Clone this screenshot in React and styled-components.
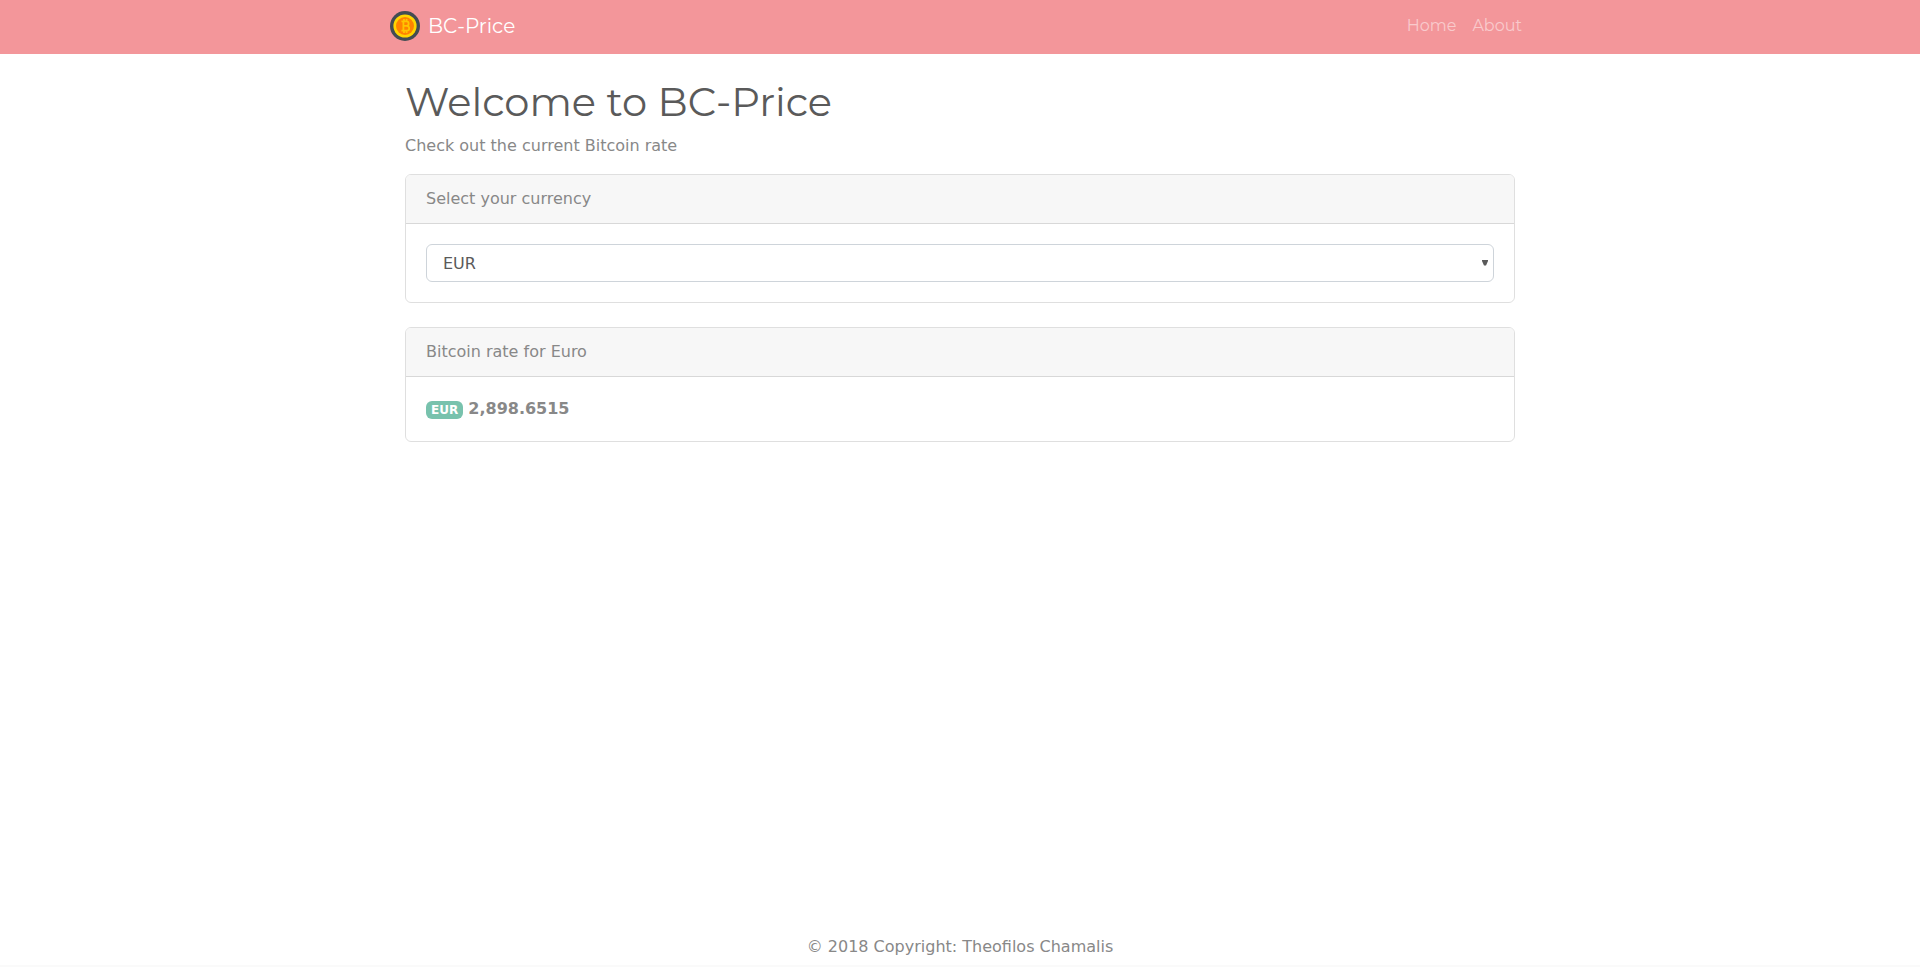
import React, { useState } from "react";
import styled, { createGlobalStyle } from "styled-components";

const display = 'Montserrat, "DejaVu Sans", sans-serif';
const body = '"DejaVu Sans", sans-serif';

const GlobalStyle = createGlobalStyle`
  *, *::before, *::after {
    box-sizing: border-box;
  }
  body {
    margin: 0;
    background: #fff;
    color: #888;
    font: 400 16px/24px ${body};
  }
`;

const Page = styled.div`
  min-height: 100vh;
  display: flex;
  flex-direction: column;
`;

const Navbar = styled.header`
  background: #f3969a;
  font-family: ${display};
`;

const NavInner = styled.div`
  max-width: 1140px;
  min-height: 54px;
  margin: 0 auto;
  display: flex;
  align-items: center;
  justify-content: space-between;
`;

const Brand = styled.a`
  display: flex;
  align-items: center;
  gap: 8px;
  padding-bottom: 2px;
  color: #fff;
  font-size: 20px;
  line-height: 30px;
  text-decoration: none;
`;

const NavLinks = styled.nav`
  display: flex;
  padding-bottom: 2px;
`;

const NavLink = styled.a`
  padding: 8px;
  color: rgba(255, 255, 255, 0.5);
  text-decoration: none;

  &:hover {
    color: rgba(255, 255, 255, 0.75);
  }
`;

const Main = styled.main`
  flex: 1;
  width: 100%;
  max-width: 1140px;
  margin: 0 auto;
  padding: 24px 15px 0;
`;

const Title = styled.h1`
  margin: 0 0 8px;
  color: #5a5a5a;
  font: 400 40px/48px ${display};
`;

const Lead = styled.p`
  margin: 0 0 16px;
`;

const Card = styled.section`
  margin-bottom: 24px;
  border: 1px solid rgba(0, 0, 0, 0.125);
  border-radius: 6px;
`;

const CardHeader = styled.div`
  display: block;
  padding: 12px 20px;
  border-bottom: 1px solid rgba(0, 0, 0, 0.125);
  border-radius: 5px 5px 0 0;
  background: #f7f7f7;
`;

const CardBody = styled.div`
  padding: 20px;
`;

const SelectWrap = styled.div`
  position: relative;
`;

const Select = styled.select`
  display: block;
  width: 100%;
  height: 38px;
  padding: 7px 16px 5px;
  border: 1px solid #ced4da;
  border-radius: 6px;
  appearance: none;
  background: #fff;
  color: #5a5a5a;
  font: 400 16px/24px ${body};
`;

const Caret = styled.svg`
  position: absolute;
  top: 16px;
  right: 6px;
  pointer-events: none;
`;

const Badge = styled.span`
  display: inline-block;
  padding: 3px 5px;
  border-radius: 6px;
  background: #78c2ad;
  color: #fff;
  font-size: 12px;
  line-height: 12px;
  font-weight: 700;
`;

const Rate = styled.strong`
  font-weight: 700;
`;

const Footer = styled.footer`
  padding: 8px 15px 6px;
  border-bottom: 2px solid #fafafa;
  text-align: center;
`;

function CoinLogo() {
  return (
    <svg width="30" height="30" viewBox="0 0 30 30" aria-hidden="true">
      <circle cx="15" cy="15" r="15" fill="#434c53" />
      <circle cx="15" cy="15" r="11.6" fill="#ffd500" />
      <circle cx="15" cy="15" r="9" fill="#ff8300" />
      <path
        d="M11.4 10.4h5a2.200 2.200 0 0 1 0 4.500h-3 3.400a2.400 2.400 0 0 1 0 4.800h-5.400M13.400 10.400v9.300M14 8v2.200M16.600 8v2.200M14 19.900v2M16.600 19.900v2"
        fill="none"
        stroke="#ffc400"
        strokeWidth="1.8"
      />
    </svg>
  );
}

const currencies = { EUR: { name: "Euro", rate: "2,898.6515" } };

export default function App() {
  const [code, setCode] = useState("EUR");
  const { name, rate } = currencies[code];

  return (
    <Page>
      <GlobalStyle />
      <Navbar>
        <NavInner>
          <Brand href="#">
            <CoinLogo />
            BC-Price
          </Brand>
          <NavLinks>
            <NavLink href="#home">Home</NavLink>
            <NavLink href="#about">About</NavLink>
          </NavLinks>
        </NavInner>
      </Navbar>
      <Main>
        <Title>Welcome to BC-Price</Title>
        <Lead>Check out the current Bitcoin rate</Lead>
        <Card>
          <CardHeader as="label" htmlFor="currency">
            Select your currency
          </CardHeader>
          <CardBody>
            <SelectWrap>
              <Select id="currency" value={code} onChange={(e) => setCode(e.target.value)}>
                {Object.keys(currencies).map((c) => (
                  <option key={c}>{c}</option>
                ))}
              </Select>
              <Caret width="6" height="6" viewBox="0 0 6 6" aria-hidden="true">
                <path d="M0 0h6v1L4 5.500H2L0 1z" fill="#5a5a5a" />
              </Caret>
            </SelectWrap>
          </CardBody>
        </Card>
        <Card>
          <CardHeader>Bitcoin rate for {name}</CardHeader>
          <CardBody>
            <Badge>{code}</Badge> <Rate>{rate}</Rate>
          </CardBody>
        </Card>
      </Main>
      <Footer>© 2018 Copyright: Theofilos Chamalis</Footer>
    </Page>
  );
}
